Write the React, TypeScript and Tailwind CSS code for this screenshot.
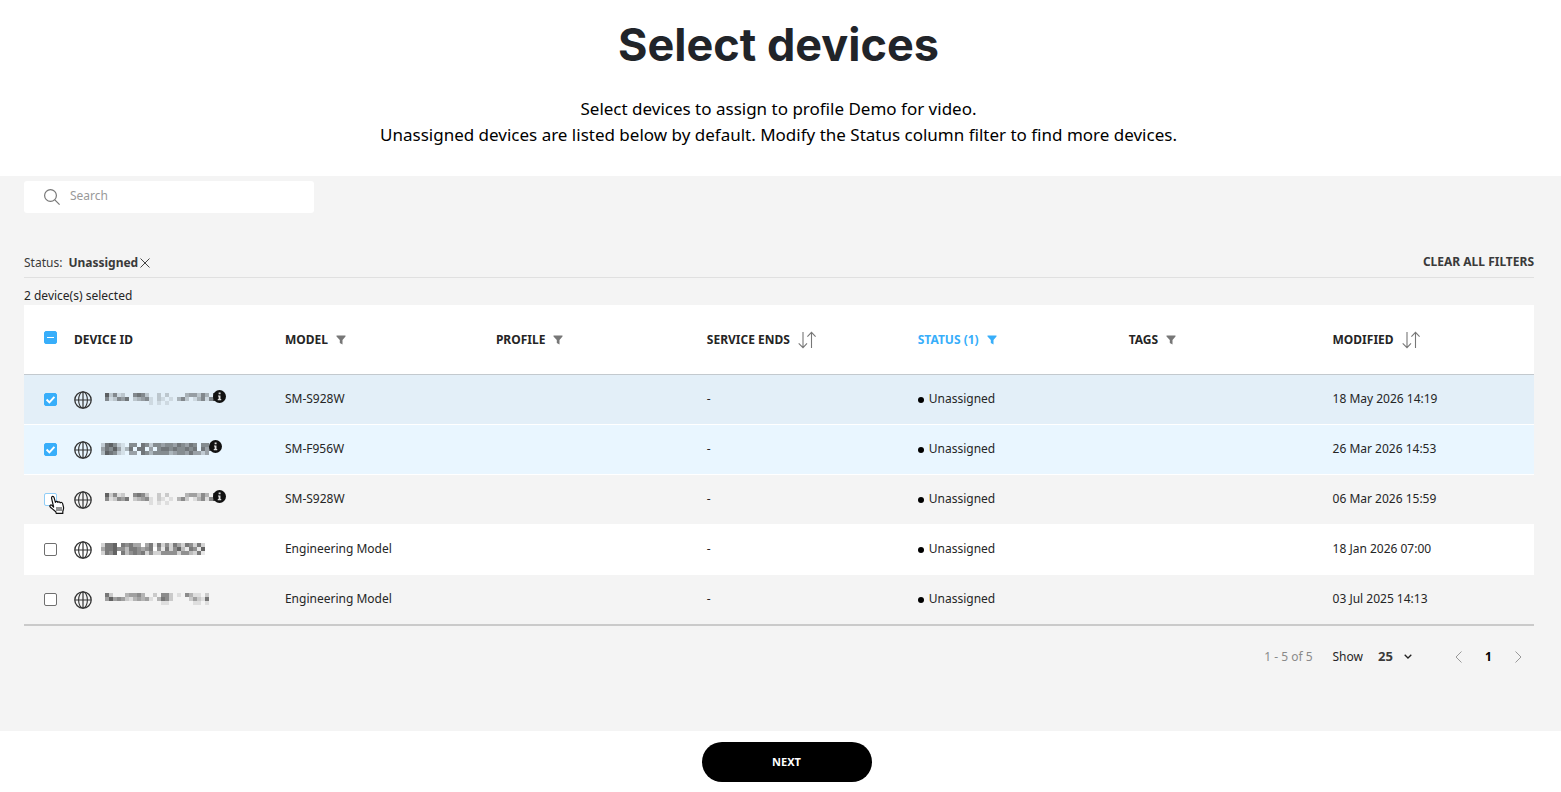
import { ReactNode } from "react";

// Darkness of every 4px cell of a masked device id, 0 is empty and 9 is black.
const MASK_A = [
  "7251200565200202000034425307",
  "5125460234510210103520135158",
  "0000000000010101000000000000",
];
const MASK_B = [
  "2675210550652554554654650550",
  "4657413606604056656556560647",
  "3765210440653555534554644240",
];
const MASK_C = [
  "26670656440461625264265262",
  "46675536654560516257316517",
  "26570635656252255552553261",
];
const MASK_D = [
  "62000344530020552010531102",
  "47454213434103652000024216",
  "00000000000000110000001101",
];

interface Device {
  mask: string[];
  maskClass: string;
  info: boolean;
  model: string;
  modified: string;
  checked: boolean;
  hovered?: boolean;
  rowClass: string;
}

const devices: Device[] = [
  {
    mask: MASK_A,
    maskClass: "ml-[13px]",
    info: true,
    model: "SM-S928W",
    modified: "18 May 2026 14:19",
    checked: true,
    rowClass: "bg-[#e3eff8]",
  },
  {
    mask: MASK_B,
    maskClass: "ml-[9px]",
    info: true,
    model: "SM-F956W",
    modified: "26 Mar 2026 14:53",
    checked: true,
    rowClass: "bg-[#e9f6ff]",
  },
  {
    mask: MASK_A,
    maskClass: "ml-[13px]",
    info: true,
    model: "SM-S928W",
    modified: "06 Mar 2026 15:59",
    checked: false,
    hovered: true,
    rowClass: "bg-[#f4f4f4]",
  },
  {
    mask: MASK_C,
    maskClass: "ml-[9px]",
    info: false,
    model: "Engineering Model",
    modified: "18 Jan 2026 07:00",
    checked: false,
    rowClass: "bg-white",
  },
  {
    mask: MASK_D,
    maskClass: "ml-[13px]",
    info: false,
    model: "Engineering Model",
    modified: "03 Jul 2025 14:13",
    checked: false,
    rowClass: "bg-[#f4f4f4]",
  },
];

function MaskedId({ rows, className }: { rows: string[]; className: string }) {
  const width = rows[0].length * 4;
  return (
    <svg
      width={width}
      height="12"
      viewBox={`0 0 ${width} 12`}
      shapeRendering="crispEdges"
      className={`shrink-0 ${className}`}
      aria-hidden="true"
    >
      {rows.map((row, y) =>
        row
          .split("")
          .map((cell, x) => (
            <rect
              key={`${x}-${y}`}
              x={x * 4}
              y={y * 4}
              width="4"
              height="4"
              fill="#222"
              fillOpacity={Number(cell) / 10}
            />
          )),
      )}
    </svg>
  );
}

function GlobeIcon() {
  return (
    <svg
      width="18"
      height="18"
      viewBox="0 0 18 18"
      fill="none"
      stroke="#333"
      className="mt-[2px] shrink-0"
    >
      <circle cx="9" cy="9" r="8.2" strokeWidth="1.3" />
      <ellipse cx="9" cy="9" rx="4.4" ry="8.2" strokeWidth="1.1" />
      <path d="M9 1v16M1 9h16" strokeWidth="1.2" />
    </svg>
  );
}

function InfoIcon() {
  return (
    <svg width="13" height="13" viewBox="0 0 12 12" className="shrink-0">
      <circle cx="6" cy="6" r="6" fill="#111" />
      <path d="M5.2 2.4H7V4H5.200zM4.600 5h2.300v3.400h.7v1H4.400v-1h.8V6h-.6z" fill="#ddd" />
    </svg>
  );
}

function FilterIcon() {
  return (
    <svg width="10" height="10" viewBox="0 0 10 10" fill="currentColor">
      <path d="M.5.5h9v1L6.500 5v4.500L3.800 8V5L.5 1.500z" />
    </svg>
  );
}

function SortIcon() {
  return (
    <svg width="18" height="18" viewBox="0 0 18 18" fill="none" stroke="#777" strokeWidth="1.1">
      <path d="M5 1v15.500M.7 12.400 5 16.600l4-4.200M13.500 17V1.500M9.400 5.600l4.100-4.200 4.100 4.200" />
    </svg>
  );
}

function HandCursor() {
  return (
    <svg
      width="17"
      height="20"
      viewBox="0 0 17 20"
      className="pointer-events-none absolute top-5 left-6"
      aria-hidden="true"
    >
      <path
        d="M5.600 12 3.600 3.300C3.300 1 5.500.6 6.100 2.700l1.300 4.600c.5-1.200 2-1.100 2.400.1.700-.9 2-.6 2.400.4.900-.7 2.200-.3 2.500 1l.8 3.400c.3 1.800-.4 3-.7 4.300v1.900H8.200l-.4-1.700c-1.800-1.200-3.800-3.200-5.600-4.700-1-1.300.4-2.600 1.700-1.700z"
        fill="#fff"
        stroke="#111"
        strokeWidth="1.2"
        strokeLinejoin="round"
      />
      <path d="M9 12v4M11 12v4M13 12v4" stroke="#111" strokeWidth=".9" />
    </svg>
  );
}

const boxClass =
  "peer block size-[13px] appearance-none rounded-[2px] border bg-white checked:border-[#38aefa] checked:bg-[#38aefa] indeterminate:border-[#38aefa] indeterminate:bg-[#38aefa]";

function ColumnHead({
  label,
  icon,
  active,
}: {
  label: string;
  icon?: ReactNode;
  active?: boolean;
}) {
  return (
    <th scope="col" className="p-0 text-left font-bold">
      <span className={`flex items-center ${active ? "text-[#38aefa]" : ""}`}>
        {label}
        {icon && (
          <button
            type="button"
            aria-label={`${label} options`}
            className={`ml-2 ${active ? "" : "text-[#777]"}`}
          >
            {icon}
          </button>
        )}
      </span>
    </th>
  );
}

function DeviceRow({ device, last }: { device: Device; last: boolean }) {
  return (
    <tr
      className={`${device.rowClass} *:p-0 *:pb-[2px] ${
        last
          ? "*:h-[51px] *:border-b-2 *:border-[#cacaca]"
          : "*:h-[50px] *:border-b *:border-white"
      }`}
    >
      <td className="relative">
        <div className="relative mt-[2px] ml-5 size-[13px]">
          <input
            type="checkbox"
            defaultChecked={device.checked}
            aria-label={`Select ${device.model}, modified ${device.modified}`}
            className={`${boxClass} ${device.hovered ? "border-[#8fcdf7]" : "border-[#6f6f6f]"}`}
          />
          <svg
            viewBox="0 0 13 13"
            className="pointer-events-none absolute inset-0 hidden size-[13px] peer-checked:block"
            fill="none"
            stroke="#fff"
            strokeWidth="2"
          >
            <path d="m2.600 6.500 2.800 2.900 5-5.600" />
          </svg>
        </div>
        {device.hovered && <HandCursor />}
      </td>
      <td>
        <div className="flex items-center">
          <GlobeIcon />
          <MaskedId rows={device.mask} className={device.maskClass} />
          {device.info && (
            <span className="-ml-1 pb-1">
              <InfoIcon />
            </span>
          )}
        </div>
      </td>
      <td>{device.model}</td>
      <td />
      <td>-</td>
      <td>
        <span className="flex items-center gap-[5px]">
          <span className="mt-[2px] size-[6px] rounded-full bg-black" />
          Unassigned
        </span>
      </td>
      <td />
      <td>{device.modified}</td>
    </tr>
  );
}

export default function App() {
  return (
    <div className="min-h-screen bg-white font-['Noto_Sans',sans-serif] text-xs text-[#252525]">
      <header className="flex flex-col items-center pt-4 pr-1 pb-7 text-center">
        <h1 className="font-['Inter',sans-serif] text-[45px] leading-[58px] font-bold text-[#212429]">
          Select devices
        </h1>
        <p className="mt-[22px] text-[17px] leading-[26px] text-black">
          Select devices to assign to profile Demo for video.
          <br />
          Unassigned devices are listed below by default. Modify the Status column filter to find
          more devices.
        </p>
      </header>

      <main className="bg-[#f4f4f4] pt-[5px] pr-[27px] pb-16 pl-6">
        <label className="flex h-8 w-[290px] items-center rounded-[3px] bg-white pl-5">
          <svg width="16" height="16" viewBox="0 0 16 16" fill="none" stroke="#777" strokeWidth="1.2">
            <circle cx="6.500" cy="6.500" r="5.900" />
            <path d="m10.800 10.800 4.800 4.800" />
          </svg>
          <input
            type="text"
            placeholder="Search"
            aria-label="Search"
            className="ml-[10px] min-w-0 flex-1 bg-transparent pb-[2px] outline-none placeholder:text-[#999]"
          />
        </label>

        <div className="mt-[35px] flex h-[30px] items-center justify-between border-b border-[#e0e0e0] text-[#3a3a3a]">
          <div className="flex items-center">
            Status:
            <b className="ml-[6px]">Unassigned</b>
            <button type="button" aria-label="Remove filter" className="ml-[2px]">
              <svg width="10" height="10" viewBox="0 0 10 10" stroke="#444" strokeWidth="1">
                <path d="m.5.5 9 9M9.500.5l-9 9" />
              </svg>
            </button>
          </div>
          <button type="button" className="pb-[2px] font-bold">
            CLEAR ALL FILTERS
          </button>
        </div>

        <p className="h-[27px] pt-[9px] leading-[18px]">2 device(s) selected</p>

        <table className="w-full table-fixed border-separate border-spacing-0">
          <colgroup>
            <col className="w-[50px]" />
            <col className="w-[13.97%]" />
            <col className="w-[13.97%]" />
            <col className="w-[13.97%]" />
            <col className="w-[13.97%]" />
            <col className="w-[13.97%]" />
            <col className="w-[13.5%]" />
            <col />
          </colgroup>
          <thead>
            <tr className="bg-white *:h-[70px] *:border-b *:border-[#c3c9ce]">
              <th className="p-0 pb-1">
                <div className="relative ml-5 size-[13px]">
                  <input
                    type="checkbox"
                    aria-label="Select all devices"
                    ref={(el) => {
                      if (el) el.indeterminate = true;
                    }}
                    className={boxClass}
                  />
                  <span className="pointer-events-none absolute top-[6px] left-[3px] h-px w-[7px] bg-white" />
                </div>
              </th>
              <ColumnHead label="DEVICE ID" />
              <ColumnHead label="MODEL" icon={<FilterIcon />} />
              <ColumnHead label="PROFILE" icon={<FilterIcon />} />
              <ColumnHead label="SERVICE ENDS" icon={<SortIcon />} />
              <ColumnHead label="STATUS (1)" icon={<FilterIcon />} active />
              <ColumnHead label="TAGS" icon={<FilterIcon />} />
              <ColumnHead label="MODIFIED" icon={<SortIcon />} />
            </tr>
          </thead>
          <tbody>
            {devices.map((device, i) => (
              <DeviceRow key={i} device={device} last={i === devices.length - 1} />
            ))}
          </tbody>
        </table>

        <div className="mt-[21px] flex h-5 items-center justify-end pr-3">
          <span className="text-[#8a8a8a]">1 - 5 of 5</span>
          <label htmlFor="page-size" className="ml-5">
            Show
          </label>
          <div className="ml-[15px] flex items-center">
            <select
              id="page-size"
              defaultValue="25"
              className="w-[26px] appearance-none text-[13px] font-bold text-[#3a3a3a]"
            >
              <option>25</option>
              <option>50</option>
              <option>100</option>
            </select>
            <svg width="8" height="5" viewBox="0 0 8 5" fill="none" stroke="#222" strokeWidth="1.3">
              <path d="m.7.7 3.300 3.300L7.300.7" />
            </svg>
          </div>
          <button type="button" aria-label="Previous page" className="ml-[43px]">
            <svg width="7" height="12" viewBox="0 0 7 12" fill="none" stroke="#999">
              <path d="M6.500.5 1 6l5.500 5.500" />
            </svg>
          </button>
          <span className="w-[53px] text-center font-bold text-black">1</span>
          <button type="button" aria-label="Next page">
            <svg width="7" height="12" viewBox="0 0 7 12" fill="none" stroke="#999">
              <path d="M.5.5 6 6 .5 11.500" />
            </svg>
          </button>
        </div>
      </main>

      <footer className="flex justify-center pt-[11px] pl-3">
        <button
          type="button"
          className="h-10 w-[170px] rounded-full bg-black text-[11px] font-bold text-white"
        >
          NEXT
        </button>
      </footer>
    </div>
  );
}
